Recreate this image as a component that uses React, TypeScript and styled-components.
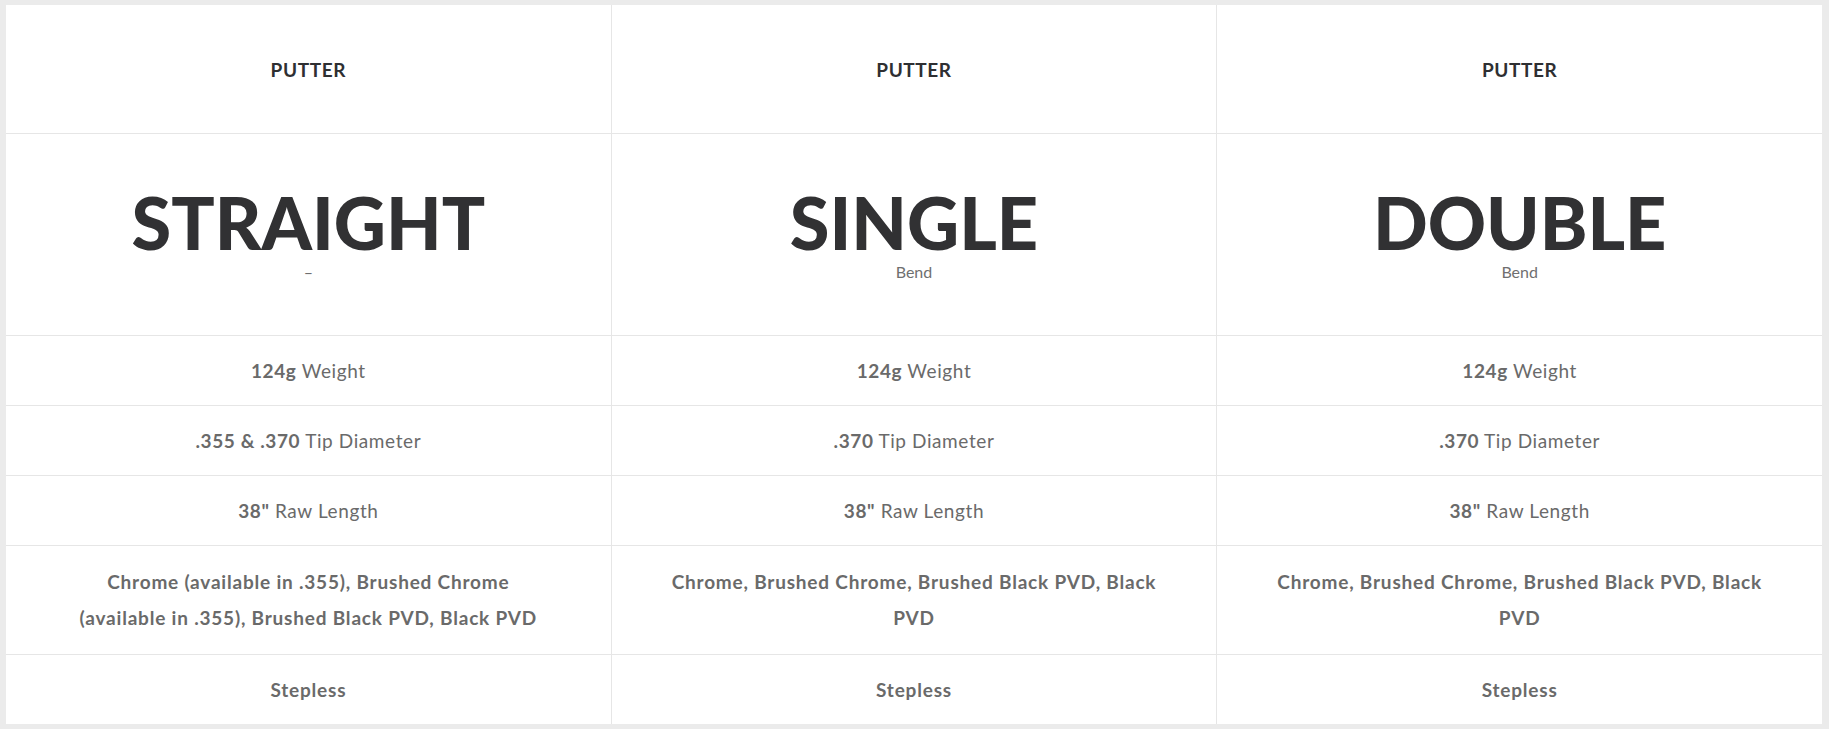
import React from 'react';
import styled, { createGlobalStyle } from 'styled-components';

type Spec = { strong: string; label?: string };

type Shaft = {
  kind: string;
  name: string;
  sub: string;
  specs: Spec[];
  finish: string;
  step: string;
};

const shafts: Shaft[] = [
  {
    kind: 'PUTTER',
    name: 'STRAIGHT',
    sub: '–',
    specs: [
      { strong: '124g', label: 'Weight' },
      { strong: '.355 & .370', label: 'Tip Diameter' },
      { strong: '38"', label: 'Raw Length' },
    ],
    // break kept where the original layout wraps it
    finish:
      'Chrome (available in .355), Brushed Chrome\n(available in .355), Brushed Black PVD, Black PVD',
    step: 'Stepless',
  },
  {
    kind: 'PUTTER',
    name: 'SINGLE',
    sub: 'Bend',
    specs: [
      { strong: '124g', label: 'Weight' },
      { strong: '.370', label: 'Tip Diameter' },
      { strong: '38"', label: 'Raw Length' },
    ],
    finish: 'Chrome, Brushed Chrome, Brushed Black PVD, Black PVD',
    step: 'Stepless',
  },
  {
    kind: 'PUTTER',
    name: 'DOUBLE',
    sub: 'Bend',
    specs: [
      { strong: '124g', label: 'Weight' },
      { strong: '.370', label: 'Tip Diameter' },
      { strong: '38"', label: 'Raw Length' },
    ],
    finish: 'Chrome, Brushed Chrome, Brushed Black PVD, Black PVD',
    step: 'Stepless',
  },
];

const App = () => {
  const rows: React.ReactNode[] = [];

  shafts.forEach((s, i) => rows.push(<HeadCell key={`h${i}`}>{s.kind}</HeadCell>));
  shafts.forEach((s, i) =>
    rows.push(
      <NameCell key={`n${i}`}>
        <BigName>{s.name}</BigName>
        <SubName>{s.sub}</SubName>
      </NameCell>
    )
  );
  [0, 1, 2].forEach((r) =>
    shafts.forEach((s, i) =>
      rows.push(
        <SpecCell key={`s${r}-${i}`}>
          <span>
            <b>{s.specs[r].strong}</b> {s.specs[r].label}
          </span>
        </SpecCell>
      )
    )
  );
  shafts.forEach((s, i) =>
    rows.push(
      <SpecCell key={`f${i}`} $bold $tall>
        <span>{s.finish}</span>
      </SpecCell>
    )
  );
  shafts.forEach((s, i) =>
    rows.push(
      <SpecCell key={`t${i}`} $bold>
        <span>{s.step}</span>
      </SpecCell>
    )
  );

  return (
    <>
      <GlobalStyle />
      <Page>
        <Table>{rows}</Table>
      </Page>
    </>
  );
};

const GlobalStyle = createGlobalStyle`
  * { box-sizing: border-box; }
  html, body {
    margin: 0;
    padding: 0;
    background: #ebebeb;
    font-family: Lato, "Noto Sans", sans-serif;
  }
`;

const Page = styled.div`
  padding: 5px 7px 6px 6px;
`;

const Table = styled.div`
  display: grid;
  grid-template-columns: repeat(3, 1fr);
  gap: 1px;
  background: #e6e6e6;
`;

const Cell = styled.div`
  background: #fff;
  display: flex;
  flex-direction: column;
  align-items: center;
  justify-content: center;
  text-align: center;
`;

const HeadCell = styled(Cell)`
  height: 128px;
  padding-top: 1px;
  font-size: 19px;
  font-weight: 700;
  color: #2e2f32;
  letter-spacing: 0.6px;
`;

const NameCell = styled(Cell)`
  height: 201px;
  padding-top: 2px;
`;

const BigName = styled.div`
  font-size: 72px;
  font-weight: 900;
  line-height: 64px;
  color: #313133;
`;

const SubName = styled.div`
  margin-top: 9px;
  font-size: 16px;
  line-height: 18px;
  color: #6f6f6f;
`;

const SpecCell = styled(Cell)<{ $bold?: boolean; $tall?: boolean }>`
  padding: ${(p) => (p.$tall ? '18px 50px' : '17px 50px 16px')};
  font-size: 19px;
  line-height: 36px;
  letter-spacing: ${(p) => (p.$bold ? '0.8px' : '0.6px')};
  color: #6a6a6a;
  font-weight: ${(p) => (p.$bold ? 700 : 400)};
  white-space: pre-line;

  b {
    font-weight: 700;
  }
`;

export default App;
